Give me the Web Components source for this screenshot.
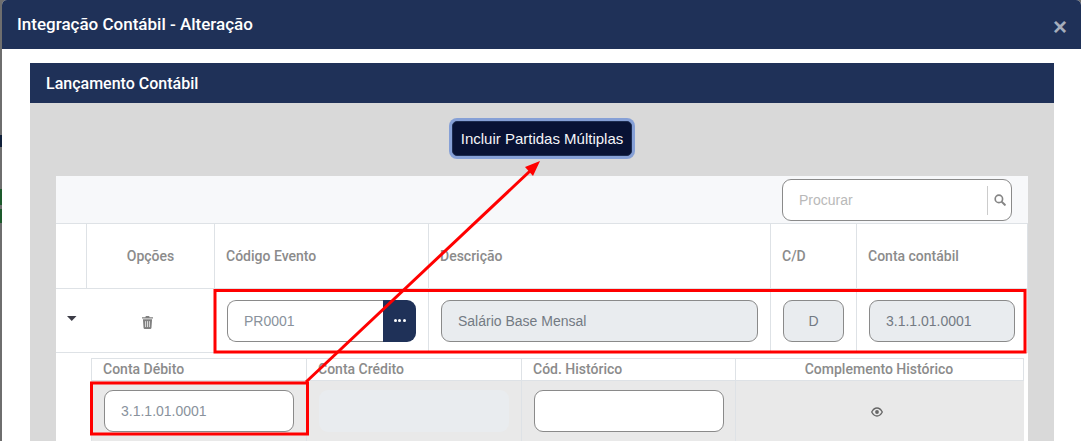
<!DOCTYPE html>
<html lang="pt-BR">
<head>
<meta charset="utf-8">
<title>Integração Contábil</title>
<style>
  html, body { margin: 0; height: 441px; overflow: hidden; }
  body {
    font-family: Roboto, "Liberation Sans", sans-serif;
    background: linear-gradient(#6e6e6e 0 135px, #10203a 135px 147px, #6e6e6e 147px 189px, #1d5a2c 189px 205px, #6e6e6e 205px 209px, #1d5a2c 209px 223px, #6e6e6e 223px);
  }
</style>
</head>
<body>
<modal-dialog heading="Integração Contábil - Alteração">
  <lancamento-card heading="Lançamento Contábil">
    <multi-button>Incluir Partidas Múltiplas</multi-button>
    <evento-table></evento-table>
  </lancamento-card>
  <markup-overlay></markup-overlay>
</modal-dialog>

<script>
const ICONS = {
  trash: `<svg width="11" height="13" viewBox="0 0 12 14"><path fill="#808080" d="M4.200 0h3.600l.5 1.200H12v1.500H0V1.200h3.700zM1 3.500h10l-.7 9.600a1 1 0 0 1-1 .9H2.700a1 1 0 0 1-1-.9z"/><path stroke="#e4e4e4" stroke-width="1" d="M3.900 5.500v6.500M6 5.500v6.500M8.100 5.500v6.500"/></svg>`,
  search: `<svg width="12" height="12" viewBox="0 0 13 13"><circle cx="5.300" cy="5.300" r="4" fill="none" stroke="#858585" stroke-width="1.800"/><path stroke="#858585" stroke-width="2.200" stroke-linecap="round" d="M8.500 8.500l3.200 3.200"/></svg>`,
  eye: `<svg width="12" height="10" viewBox="0 0 12 10"><path fill="none" stroke="#666" stroke-width="1.300" d="M.7 5C2 2.500 3.800 1 6 1s4 1.500 5.300 4C10 7.500 8.200 9 6 9S2 7.500.7 5z"/><circle cx="6" cy="5" r="1.900" fill="#666"/></svg>`,
  caret: `<svg width="10" height="5" viewBox="0 0 10 5"><path fill="#3c3c46" d="M0 0h9.500L4.750 5z"/></svg>`,
};

class ModalDialog extends HTMLElement {
  constructor() {
    super();
    this.attachShadow({ mode: "open" });
  }
  connectedCallback() {
    this.shadowRoot.innerHTML = `
      <style>
        :host { display: block; position: relative; margin-left: 2px; height: 441px; background: #fff; border-radius: 5px 5px 0 0; overflow: hidden; }
        header { height: 49px; box-sizing: border-box; background: #1f3158; color: #fff; display: flex; align-items: center; justify-content: space-between; padding: 0 14px 0 15px; }
        h1 { margin: 0 0 1px; font-size: 17px; font-weight: 500; }
        .close { color: #a5adbc; font: 700 24px/1 "Liberation Sans", sans-serif; margin-top: 5px; }
        main { padding: 14px 27px 0 28px; }
      </style>
      <header><h1>${this.getAttribute("heading")}</h1><span class="close">×</span></header>
      <main><slot></slot></main>`;
  }
}

class LancamentoCard extends HTMLElement {
  constructor() {
    super();
    this.attachShadow({ mode: "open" });
  }
  connectedCallback() {
    this.shadowRoot.innerHTML = `
      <style>
        :host { display: block; background: #d9d9d9; height: 400px; }
        h2 { margin: 0; height: 40px; line-height: 41px; padding-left: 16px; background: #1f3158; color: #fff; font-size: 16px; font-weight: 500; }
        .body { padding: 15px 26px 0; display: flex; flex-direction: column; align-items: center; gap: 17px; }
      </style>
      <h2>${this.getAttribute("heading")}</h2>
      <div class="body"><slot></slot></div>`;
  }
}

class MultiButton extends HTMLElement {
  constructor() {
    super();
    this.attachShadow({ mode: "open" });
  }
  connectedCallback() {
    this.shadowRoot.innerHTML = `
      <style>
        :host { display: block; }
        button { display: block; box-sizing: border-box; padding: 0; background: #081234; color: #f4f5f8; border: 1px solid #1d2c50; border-radius: 5px; box-shadow: 0 0 0 3px #86a0d6; margin: 3px; width: 180px; height: 35px; font: 15px "Liberation Sans", sans-serif; }
      </style>
      <button><slot></slot></button>`;
  }
}

class TextField extends HTMLElement {
  static get observedAttributes() {
    return ["value"];
  }
  constructor() {
    super();
    this.attachShadow({ mode: "open" });
  }
  connectedCallback() {
    this.render();
  }
  attributeChangedCallback() {
    this.render();
  }
  render() {
    this.shadowRoot.innerHTML = `
      <style>
        :host { display: block; box-sizing: border-box; height: 42px; border: 1px solid #8a8a8a; border-radius: 9px; background: #fff; color: #89929c; font: 14px/40px "Liberation Sans", sans-serif; padding: 0 16px; overflow: hidden; white-space: nowrap; }
        :host([readonly]) { background: #e9ecef; color: #737a83; }
        :host([plain]) { border-color: transparent; }
        :host([center]) { text-align: center; padding: 0; }
      </style>${this.getAttribute("value") || ""}`;
  }
}

class SearchBox extends HTMLElement {
  constructor() {
    super();
    this.attachShadow({ mode: "open" });
  }
  connectedCallback() {
    this.shadowRoot.innerHTML = `
      <style>
        :host { display: flex; align-items: center; box-sizing: border-box; width: 230px; height: 42px; border: 1px solid #8a8a8a; border-radius: 9px; background: #fff; }
        .ph { flex: 1; padding-left: 16px; color: #b9b9b9; font: 14px "Liberation Sans", sans-serif; }
        .sep { width: 1px; height: 29px; background: #ccc; }
        .ic { width: 23px; display: flex; justify-content: center; box-sizing: border-box; }
      </style>
      <span class="ph">Procurar</span><span class="sep"></span><span class="ic">${ICONS.search}</span>`;
  }
}

class EventoTable extends HTMLElement {
  constructor() {
    super();
    this.attachShadow({ mode: "open" });
  }
  connectedCallback() {
    this.shadowRoot.innerHTML = `
      <style>
        :host { display: block; align-self: stretch; background: #fff; height: 300px; color: #8b8b8b; font-size: 14px; font-weight: 500; }
        .toolbar { height: 48px; box-sizing: border-box; background: #f7f8fa; display: flex; justify-content: flex-end; padding: 3px 16px 0 0; border-bottom: 1px solid #dee2e6; }
        .row { display: grid; grid-template-columns: 31px 128px 214px 342px 86px 171px; }
        .cell { box-sizing: border-box; border-right: 1px solid #dee2e6; display: flex; align-items: center; }
        .head .cell { height: 65px; border-bottom: 1px solid #dee2e6; padding: 0 0 1px 11px; }
        .head .cell.opc { justify-content: center; padding-left: 0; }
        .body .cell { height: 64px; border-bottom: 1px solid #dee2e6; padding: 0 12px; }
        .body .cell.arrow { justify-content: center; padding: 0 0 4px; border-right: 0; }
        .body .cell.del { justify-content: center; padding: 3px 6px 0 0; }
        .body text-field { flex: 1; }
        .picker { flex: 1; display: flex; }
        .picker text-field { border-radius: 9px 0 0 9px; border-right: 0; }
        .dots { width: 33px; height: 42px; background: #1f3158; color: #fff; border-radius: 0 9px 9px 0; display: flex; align-items: center; justify-content: center; gap: 1.5px; }
        .dots i { width: 3px; height: 3px; border-radius: 50%; background: #fff; }
        .nested-wrap { padding: 5px 4px 0 35px; }
        .nested { display: grid; grid-template-columns: 215px 215px 214px 288px; border: 1px solid #dee2e6; border-width: 1px 1px 0 1px; color: #8b8b8b; }
        .nested > div { box-sizing: border-box; border-right: 1px solid #dee2e6; }
        .nested > div:nth-child(4n) { border-right: 0; }
        .nh { height: 22px; line-height: 21px; padding-left: 11px; border-bottom: 1px solid #dee2e6; }
        .nh.c { padding: 0 2px 0 0; text-align: center; }
        .nb { height: 61px; background: #e9e9e9; padding: 9px 12px 0; }
        .nb.eye { display: flex; justify-content: center; padding: 26px 6px 0 0; }
        .nb text-field { width: 190px; }
      </style>
      <div class="toolbar"><search-box></search-box></div>
      <div class="row head">
        <div class="cell"></div>
        <div class="cell opc">Opções</div>
        <div class="cell">Código Evento</div>
        <div class="cell">Descrição</div>
        <div class="cell">C/D</div>
        <div class="cell">Conta contábil</div>
      </div>
      <div class="row body">
        <div class="cell arrow">${ICONS.caret}</div>
        <div class="cell del">${ICONS.trash}</div>
        <div class="cell"><div class="picker"><text-field value="PR0001"></text-field><span class="dots"><i></i><i></i><i></i></span></div></div>
        <div class="cell"><text-field readonly value="Salário Base Mensal"></text-field></div>
        <div class="cell"><text-field readonly center value="D"></text-field></div>
        <div class="cell"><text-field readonly value="3.1.1.01.0001"></text-field></div>
      </div>
      <div class="nested-wrap">
        <div class="nested">
          <div class="nh">Conta Débito</div>
          <div class="nh">Conta Crédito</div>
          <div class="nh">Cód. Histórico</div>
          <div class="nh c">Complemento Histórico</div>
          <div class="nb"><text-field value="3.1.1.01.0001"></text-field></div>
          <div class="nb"><text-field readonly plain></text-field></div>
          <div class="nb"><text-field></text-field></div>
          <div class="nb eye">${ICONS.eye}</div>
        </div>
      </div>`;
  }
}

class MarkupOverlay extends HTMLElement {
  constructor() {
    super();
    this.attachShadow({ mode: "open" });
  }
  connectedCallback() {
    this.shadowRoot.innerHTML = `
      <style>
        :host { position: absolute; left: -2px; top: 0; width: 1081px; height: 441px; pointer-events: none; }
        svg { display: block; }
      </style>
      <svg width="1081" height="441" fill="none" stroke="#f00" stroke-width="3">
        <rect x="215" y="290.500" width="810" height="61.500"/>
        <rect x="91.500" y="383" width="216" height="51"/>
        <path d="M306 382L530 171"/>
        <path fill="#f00" stroke="none" d="M540 161L525 167L533 176z"/>
      </svg>`;
  }
}

customElements.define("text-field", TextField);
customElements.define("search-box", SearchBox);
customElements.define("evento-table", EventoTable);
customElements.define("multi-button", MultiButton);
customElements.define("lancamento-card", LancamentoCard);
customElements.define("markup-overlay", MarkupOverlay);
customElements.define("modal-dialog", ModalDialog);
</script>
</body>
</html>
